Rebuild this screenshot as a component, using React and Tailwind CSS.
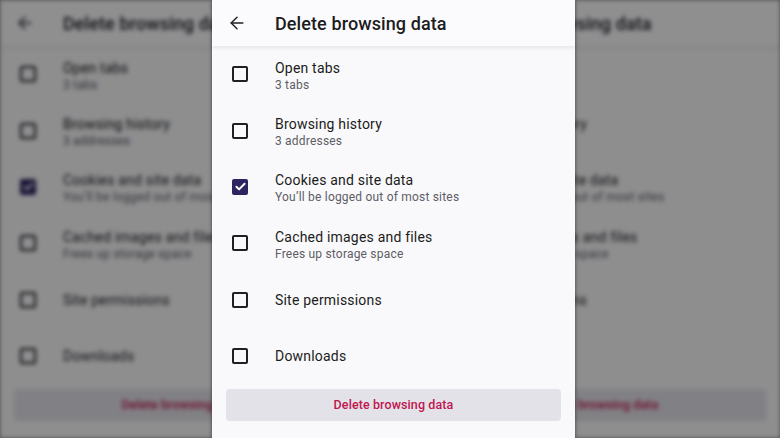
import { ArrowLeft } from 'lucide-react';

const ITEMS = [
  { title: 'Open tabs', sub: '3 tabs', checked: false },
  { title: 'Browsing history', sub: '3 addresses', checked: false },
  { title: 'Cookies and site data', sub: 'You\u2019ll be logged out of most sites', checked: true },
  { title: 'Cached images and files', sub: 'Frees up storage space', checked: false },
  { title: 'Site permissions', checked: false },
  { title: 'Downloads', checked: false },
];

function Checkbox({ checked }) {
  if (checked) {
    return (
      <div className="w-4 h-4 rounded-[2px] bg-[#2d2562] flex items-center justify-center">
        <svg width="13" height="13" viewBox="0 0 24 24" fill="none" stroke="white" strokeWidth="3.6" strokeLinecap="round" strokeLinejoin="round">
          <path d="M4.5 12.5l4.8 4.8L19.5 7" />
        </svg>
      </div>
    );
  }
  return <div className="w-4 h-4 rounded-[2px] border-2 border-[#1f1f24]" />;
}

function Panel() {
  return (
    <div className="w-[363px] h-[438px] bg-[#f9f9fb] flex flex-col" style={{ fontFamily: 'Roboto, "Noto Sans", sans-serif' }}>
      {/* header */}
      <div className="h-[46px] shrink-0 bg-[#fbfbfe] shadow-[0_2px_4px_rgba(0,0,0,0.08)] flex items-center z-10">
        <div className="w-[63px] pl-[15px] flex items-center">
          <ArrowLeft size={20} strokeWidth={1.7} className="text-[#1f1f24]" />
        </div>
        <span className="text-[18px] font-medium text-[#1c1b20] tracking-[0.1px]">Delete browsing data</span>
      </div>

      {ITEMS.map(item => (
        <div key={item.title} className="h-[56.4px] shrink-0 flex items-center">
          <div className="w-[63px] pl-[20px] flex items-center">
            <Checkbox checked={item.checked} />
          </div>
          {item.sub ? (
            <div className="flex flex-col pt-[3px]">
              <span className="text-[14px] leading-[18px] text-[#1c1b20] tracking-[0.2px]">{item.title}</span>
              <span className="text-[12px] leading-[16px] text-[#5e5d66] tracking-[0.2px]">{item.sub}</span>
            </div>
          ) : (
            <span className="text-[14px] leading-[18px] text-[#1c1b20] tracking-[0.2px]">{item.title}</span>
          )}
        </div>
      ))}

      <div className="px-[14px] mt-[5px]">
        <div className="h-[32px] rounded-[4px] bg-[#e3e2e8] flex items-center justify-center">
          <span className="text-[12.5px] font-medium text-[#c0154f] tracking-[0.1px]">Delete browsing data</span>
        </div>
      </div>
    </div>
  );
}

export default function App() {
  return (
    <div className="w-[780px] h-[438px] relative overflow-hidden bg-[#8e8e90]">
      {/* blurred backdrop copies */}
      <div className="flex justify-between blur-[2px]">
        <Panel />
        <Panel />
      </div>
      <div className="absolute inset-0 bg-black/[0.43]" />

      {/* foreground screen */}
      <div className="absolute top-0 left-[212px] shadow-[0_0_4px_rgba(0,0,0,0.55)]">
        <Panel />
      </div>
    </div>
  );
}
